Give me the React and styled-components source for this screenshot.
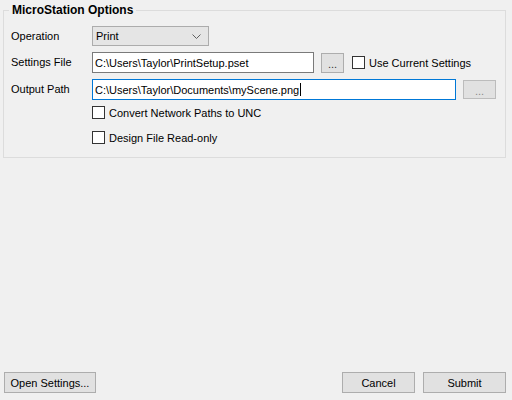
import styled, { createGlobalStyle } from 'styled-components';

const GlobalStyle = createGlobalStyle`
	html, body {
		margin: 0;
		padding: 0;
		background: #f0f0f0;
	}
	body {
		font-family: 'Liberation Sans', Arial, sans-serif;
		font-size: 11px;
		color: #000;
	}
`;

const Window = styled.div`
	width: 512px;
	height: 400px;
	box-sizing: border-box;
	display: flex;
	flex-direction: column;
	padding: 2px 6px 7px 3px;
	background: #f0f0f0;
`;

const GroupBox = styled.fieldset`
	margin: 0;
	padding: 8px 7px 13px 7px;
	border: 1px solid #dcdcdc;
	border-radius: 0;
	display: flex;
	flex-direction: column;
	gap: 6px;
`;

const Legend = styled.legend`
	padding: 0 3px;
	margin-left: -2px;
	font-size: 12px;
	font-weight: bold;
	line-height: 16px;
	color: #000;
`;

const Row = styled.div`
	display: flex;
	align-items: center;
	height: ${({ $h }) => $h || 21}px;
	margin-top: ${({ $mt }) => $mt || 0}px;
`;

const Label = styled.span`
	width: 81px;
	flex-shrink: 0;
	line-height: 14px;
	margin-top: -1px;
`;

const Indent = styled.span`
	width: 81px;
	flex-shrink: 0;
`;

const Combo = styled.div`
	width: 117px;
	height: 20px;
	box-sizing: border-box;
	border: 1px solid #acacac;
	background: #e5e5e5;
	display: flex;
	align-items: center;
	justify-content: space-between;
	padding: 0 7px 0 3px;
`;

const TextBox = styled.div`
	width: ${({ $w }) => $w}px;
	height: 21px;
	box-sizing: border-box;
	border: 1px solid ${({ $focused }) => ($focused ? '#0078d7' : '#7a7a7a')};
	background: #fff;
	display: flex;
	align-items: center;
	padding: 0 2px;
	white-space: nowrap;
	overflow: hidden;
`;

const Caret = styled.span`
	display: inline-block;
	width: 1px;
	height: 13px;
	background: #000;
	margin-left: 1px;
`;

const Browse = styled.button`
	width: ${({ $w }) => $w}px;
	height: ${({ $h }) => $h}px;
	margin-left: 7px;
	padding: 3px 0 0;
	box-sizing: border-box;
	border: 1px solid ${({ disabled }) => (disabled ? '#bcbcbc' : '#adadad')};
	background: #e1e1e1;
	color: ${({ disabled }) => (disabled ? '#8a8a8a' : '#333')};
	font-family: inherit;
	font-size: 11px;
	line-height: 1;
`;

const Check = styled.label`
	display: flex;
	align-items: center;
	gap: 4px;
	margin-left: ${({ $ml }) => $ml || 0}px;
	white-space: nowrap;
`;

const Box = styled.span`
	width: 13px;
	height: 13px;
	box-sizing: border-box;
	border: 1px solid #333;
	background: #fff;
	flex-shrink: 0;
`;

const Footer = styled.div`
	margin-top: auto;
	display: flex;
	align-items: center;
	gap: 8px;
	padding-left: 1px;
`;

const Spacer = styled.div`
	flex: 1;
`;

const Button = styled.button`
	width: ${({ $w }) => $w}px;
	height: 21px;
	box-sizing: border-box;
	border: 1px solid #adadad;
	background: #e1e1e1;
	color: #000;
	font-family: inherit;
	font-size: 11px;
	padding: 0;
`;

const Chevron = () => (
	<svg width='9' height='5' viewBox='0 0 9 5'>
		<path d='M0.5 0.5 L4.5 4.5 L8.5 0.5' fill='none' stroke='#606060' strokeWidth='1' />
	</svg>
);

const App = () => {
	return (
		<Window>
			<GlobalStyle />
			<GroupBox>
				<Legend>MicroStation Options</Legend>
				<Row $h={20}>
					<Label>Operation</Label>
					<Combo>
						<span>Print</span>
						<Chevron />
					</Combo>
				</Row>
				<Row>
					<Label>Settings File</Label>
					<TextBox $w={222}>C:\Users\Taylor\PrintSetup.pset</TextBox>
					<Browse $w={23} $h={20}>...</Browse>
					<Check $ml={8}>
						<Box />
						Use Current Settings
					</Check>
				</Row>
				<Row>
					<Label>Output Path</Label>
					<TextBox $w={364} $focused>
						C:\Users\Taylor\Documents\myScene.png
						<Caret />
					</TextBox>
					<Browse $w={33} $h={19} disabled>
						...
					</Browse>
				</Row>
				<Row $h={13}>
					<Indent />
					<Check>
						<Box />
						Convert Network Paths to UNC
					</Check>
				</Row>
				<Row $h={13} $mt={6}>
					<Indent />
					<Check>
						<Box />
						Design File Read-only
					</Check>
				</Row>
			</GroupBox>
			<Footer>
				<Button $w={92}>Open Settings...</Button>
				<Spacer />
				<Button $w={73}>Cancel</Button>
				<Button $w={83}>Submit</Button>
			</Footer>
		</Window>
	);
};

export default App;
